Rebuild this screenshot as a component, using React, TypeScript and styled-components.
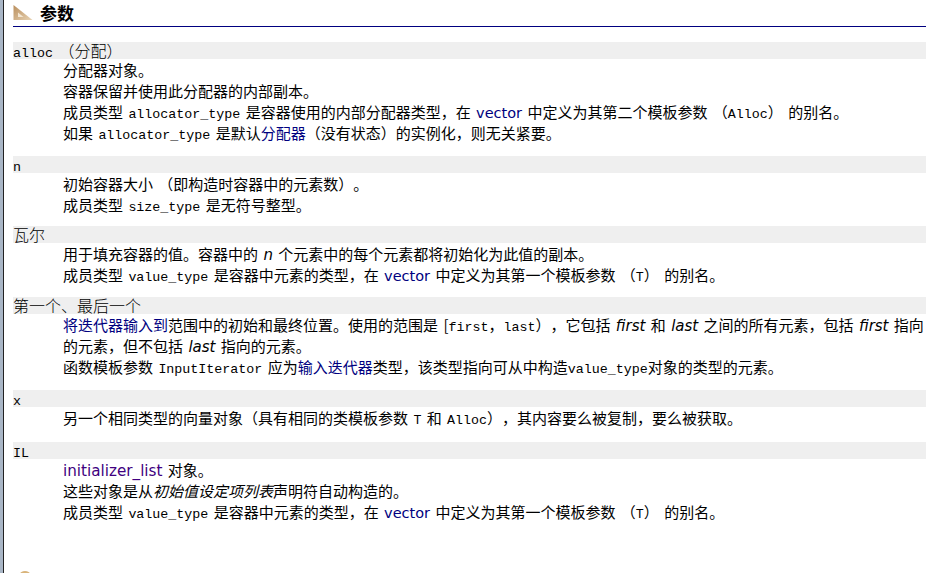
import React from "react";
import styled, { createGlobalStyle } from "styled-components";

const Global = createGlobalStyle`
  html, body { margin: 0; padding: 0; background: #fff; overflow: hidden; }
`;
const Page = styled.div`
  width: 933px; height: 573px; box-sizing: border-box; overflow: hidden;
  border-left: 1px solid #222; margin-left: 3px; position: relative; background: #fff;
  box-shadow: -3px 0 0 #a9b6c6;
  padding: 0 10px 0 9px;
  font-family: "Noto Sans CJK SC", "Liberation Sans", sans-serif; font-size: 15px; color: #000;
  text-spacing-trim: space-all; word-spacing: 2px; font-kerning: none;
`;
const Heading = styled.h3`
  display: flex; align-items: center; gap: 7px; margin: 0; height: 26px;
  border-bottom: 1px solid #000080; font-size: 17px; font-weight: 700; line-height: 26px;
`;
const List = styled.dl` margin: 15px 0 0; `;
const Term = styled.dt<{ $gap?: number }>`
  background: #efefef; height: 17px; line-height: 17px; white-space: pre; font-size: 16px; font-weight: 300;
  margin-top: ${p => p.$gap ?? 0}px;
`;
const Desc = styled.dd`
  margin: 0; padding-left: 50px; line-height: 21px;
`;
const Mono = styled.span` font-family: "Liberation Mono", "Noto Sans CJK SC", monospace; font-size: 13.33px; line-height: 1; `;
const Link = styled.a` color: #000080; `;
const Visited = styled.a` color: #400080; `;
const Em = styled.i` font-family: "DejaVu Sans", "Noto Sans CJK SC", sans-serif; font-size: 15px; line-height: 1; `;
const Sans = styled.span<{ $size?: number }>` font-family: "DejaVu Sans", sans-serif; font-size: ${p => p.$size ?? 14.5}px; line-height: 1; `;
const Corner = styled.svg` position: absolute; left: 15px; top: 570px; `;

const Ruler = () => (
  <svg width="20" height="16" viewBox="0 0 20 16">
    <defs>
      <linearGradient id="rulerTan" x1="0" y1="0" x2="1" y2="1">
        <stop offset="0" stopColor="#b98e5c" />
        <stop offset="1" stopColor="#e8d3b4" />
      </linearGradient>
    </defs>
    <path d="M0.5 0 L19.5 15 L0.5 15 Z" fill="url(#rulerTan)" />
    <path d="M5 7.5 L5 12 L10.5 12 Z" fill="#f3e6d2" />
  </svg>
);

export default function App() {
  return (
    <Page>
      <Global />
      <Heading><Ruler />参数</Heading>
      <List>
        <Term><Mono>alloc</Mono> （分配）</Term>
        <Desc>分配器对象。<br />容器保留并使用此分配器的内部副本。<br />
          成员类型 <Mono>allocator_type</Mono> 是容器使用的内部分配器类型，在 <Link><Sans>vector</Sans></Link> 中定义为其第二个模板参数 （<Mono>Alloc</Mono>） 的别名。<br />
          如果 <Mono>allocator_type</Mono> 是默认<Link>分配器</Link>（没有状态）的实例化，则无关紧要。</Desc>
        <Term $gap={13}><Mono>n</Mono></Term>
        <Desc>初始容器大小 （即构造时容器中的元素数）。<br />成员类型 <Mono>size_type</Mono> 是无符号整型。</Desc>
        <Term $gap={11}>瓦尔</Term>
        <Desc>用于填充容器的值。容器中的 <Em>n</Em> 个元素中的每个元素都将初始化为此值的副本。<br />
          成员类型 <Mono>value_type</Mono> 是容器中元素的类型，在 <Link><Sans>vector</Sans></Link> 中定义为其第一个模板参数 （<Mono>T</Mono>） 的别名。</Desc>
        <Term $gap={12}>第一个、最后一个</Term>
        <Desc><Link>将迭代器输入到</Link>范围中的初始和最终位置。使用的范围是 [<Mono>first</Mono>，<Mono>last</Mono>），它包括 <Em>first</Em> 和 <Em>last</Em> 之间的所有元素，包括 <Em>first</Em> 指向的元素，但不包括 <Em>last</Em> 指向的元素。<br />
          函数模板参数 <Mono>InputIterator</Mono> 应为<Link>输入迭代器</Link>类型，该类型指向可从中构造<Mono>value_type</Mono>对象的类型的元素。</Desc>
        <Term $gap={13}><Mono>x</Mono></Term>
        <Desc>另一个相同类型的向量对象（具有相同的类模板参数 <Mono>T</Mono> 和 <Mono>Alloc</Mono>），其内容要么被复制，要么被获取。</Desc>
        <Term $gap={14}><Mono>IL</Mono></Term>
        <Desc><Visited><Sans $size={15.2}>initializer_list</Sans></Visited> 对象。<br />这些对象是从<Em>初始值设定项列表</Em>声明符自动构造的。<br />
          成员类型 <Mono>value_type</Mono> 是容器中元素的类型，在 <Link><Sans>vector</Sans></Link> 中定义为其第一个模板参数 （<Mono>T</Mono>） 的别名。</Desc>
      </List>
      <Corner width="12" height="3"><ellipse cx="6" cy="4" rx="5" ry="3" fill="#d9b47a" /></Corner>
    </Page>
  );
}
